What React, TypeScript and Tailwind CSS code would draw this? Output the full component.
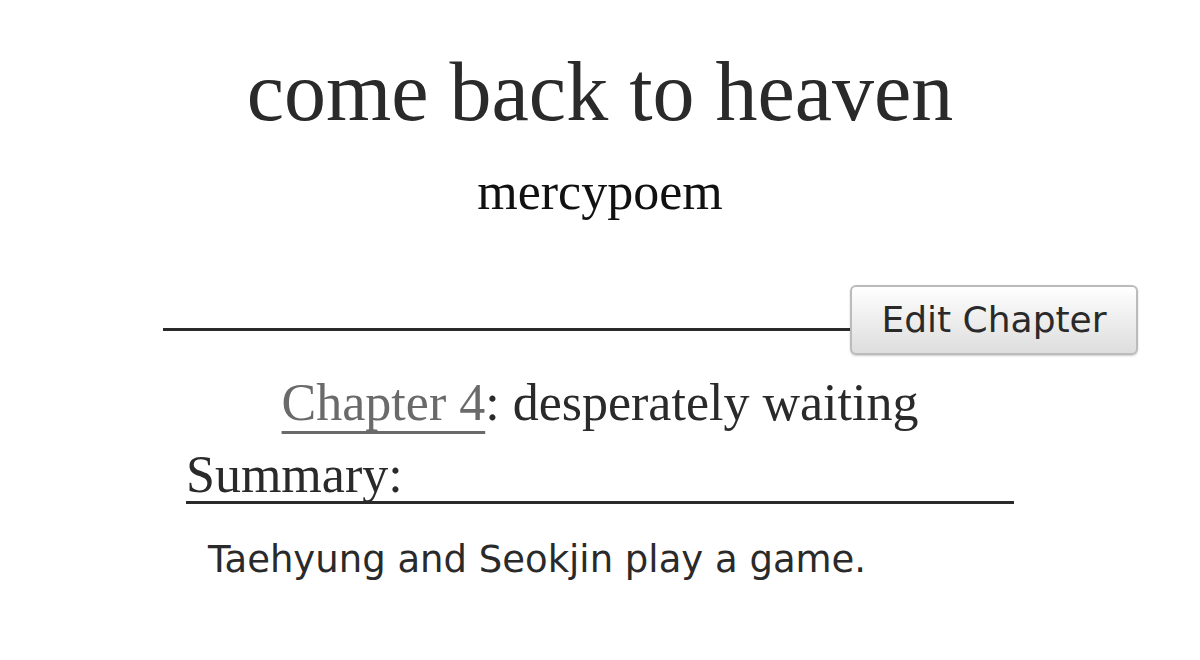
import React from 'react';

const serif = "font-['Liberation_Serif','Times_New_Roman',serif]";
const sans = "font-['DejaVu_Sans','Verdana',sans-serif]";

const WorkHeader = () => {
    return (
        <div className="flex flex-col items-center pt-[50px]">
            <h2 className={`${serif} text-[84px] leading-none text-[#2a2a2a]`}>come back to heaven</h2>
            <h3 className={`${serif} text-[52px] leading-none text-[#111] mt-[32px]`}>mercypoem</h3>
        </div>
    );
};

const ChapterBar = () => {
    return (
        <div className="flex items-end pl-[163px] pr-[62px] mt-[67px]">
            <div className="flex-1 border-b-[3px] border-[#2a2a2a] mb-[24px]"></div>
            <button className={`${sans} text-[36px] leading-none text-[#2a2a2a] h-[70px] w-[288px] rounded-[6px] border-2 border-[#bbb] bg-gradient-to-b from-white to-[#ddd] shadow-[0_1px_2px_rgba(0,0,0,0.2)]`}>
                Edit Chapter
            </button>
        </div>
    );
};

export default function App() {
    return (
        <div className="w-[1200px] h-[660px] bg-white overflow-hidden">
            <WorkHeader />
            <ChapterBar />
            <div className="flex flex-col items-center">
                <h3 className={`${serif} text-[52px] leading-none text-[#2a2a2a] mt-[22px]`}>
                    <a className="text-[#6a6a6a] underline decoration-[3px] underline-offset-[11px] decoration-[#6a6a6a] [text-decoration-skip-ink:none]">Chapter 4</a>: desperately waiting
                </h3>
                <div className="w-[828px] mt-[20px] border-b-[3px] border-[#2a2a2a]">
                    <h3 className={`${serif} text-[52px] leading-none text-[#2a2a2a]`}>Summary:</h3>
                </div>
                <div className="w-[828px] pl-[22px] mt-[37px]">
                    <p className={`${sans} text-[37px] leading-none text-[#2a2a2a]`}>Taehyung and Seokjin play a game.</p>
                </div>
            </div>
        </div>
    );
}
